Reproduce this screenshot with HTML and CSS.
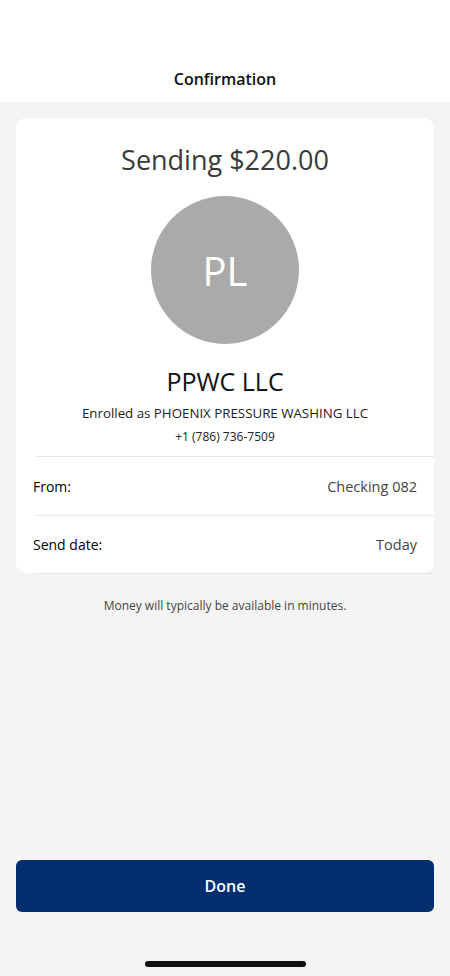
FILE: index.html
```html
<!DOCTYPE html>
<html lang="en">
<head>
    <meta charset="UTF-8">
    <meta name="viewport" content="width=device-width, initial-scale=1.0">
    <title>Confirmation</title>
    <link rel="stylesheet" href="styles.css">
</head>
<body>

    <!-- Header -->
    <header class="top-bar">
        <h1 class="top-title">Confirmation</h1>
    </header>

    <main class="page">
        <!-- Summary Card -->
        <section class="summary-card">
            <h2 class="amount">Sending $220.00</h2>
            <div class="avatar">PL</div>
            <div class="payee-name">PPWC LLC</div>
            <div class="payee-enrolled">Enrolled as PHOENIX PRESSURE WASHING LLC</div>
            <div class="payee-phone">+1 (786) 736-7509</div>

            <div class="detail-row">
                <span class="detail-label">From:</span>
                <span class="detail-value">Checking 082</span>
            </div>
            <div class="detail-row">
                <span class="detail-label">Send date:</span>
                <span class="detail-value">Today</span>
            </div>
        </section>

        <p class="note">Money will typically be available in minutes.</p>

        <div class="spacer"></div>

        <button class="done-btn">Done</button>

        <div class="home-bar"></div>
    </main>

</body>
</html>
```

FILE: styles.css
```css
/* Base */
* {
    box-sizing: border-box;
}

body {
    margin: 0;
    height: 976px;
    display: flex;
    flex-direction: column;
    background: #f4f4f4;
    font-family: "Open Sans", "Noto Sans", sans-serif;
    color: #222;
}

/* Header */
.top-bar {
    height: 102px;
    background: #fff;
    display: flex;
    align-items: flex-end;
    justify-content: center;
    padding-bottom: 12px;
}

.top-title {
    margin: 0;
    font-size: 16px;
    font-weight: 600;
    color: #111;
}

/* Page */
.page {
    flex: 1;
    display: flex;
    flex-direction: column;
    padding: 16px 16px 9px;
}

/* Summary Card */
.summary-card {
    background: #fff;
    border-radius: 10px;
    display: flex;
    flex-direction: column;
    align-items: center;
    padding-top: 24px;
}

.amount {
    margin: 0;
    font-size: 27px;
    font-weight: 400;
    color: #3a3a3a;
    line-height: 36px;
}

.avatar {
    width: 148px;
    height: 148px;
    border-radius: 50%;
    background: #aaaaaa;
    color: #fff;
    font-size: 40px;
    display: flex;
    align-items: center;
    justify-content: center;
    margin-top: 18px;
}

.payee-name {
    margin-top: 20px;
    font-size: 25px;
    line-height: 34px;
    color: #111;
}

.payee-enrolled {
    margin-top: 6px;
    font-size: 13.3px;
    line-height: 18px;
    color: #222;
}

.payee-phone {
    margin-top: 6px;
    font-size: 12px;
    line-height: 18px;
    color: #222;
}

/* Detail Rows */
.detail-row {
    align-self: stretch;
    margin-left: 20px;
    border-top: 1px solid #e6e6e6;
    display: flex;
    justify-content: space-between;
    align-items: center;
    height: 59px;
    padding: 0 17px 0 0;
}

.summary-card .payee-phone + .detail-row {
    margin-top: 10px;
}

.detail-row:last-child {
    border-bottom: 1px solid #e6e6e6;
    margin-bottom: -1px;
}

.detail-label {
    margin-left: -3px;
    font-size: 14px;
    color: #000;
}

.detail-value {
    font-size: 14.5px;
    color: #444;
}

/* Note */
.note {
    margin: 24px 0 0;
    text-align: center;
    font-size: 12px;
    color: #444;
}

.spacer {
    flex: 1;
}

/* Done Button */
.done-btn {
    height: 52px;
    border: none;
    border-radius: 6px;
    background: #022e6f;
    color: #fff;
    font-family: inherit;
    font-size: 16px;
    font-weight: 600;
    cursor: pointer;
}

.home-bar {
    align-self: center;
    width: 161px;
    height: 6px;
    border-radius: 3px;
    background: #111;
    margin-top: 49px;
}
```
